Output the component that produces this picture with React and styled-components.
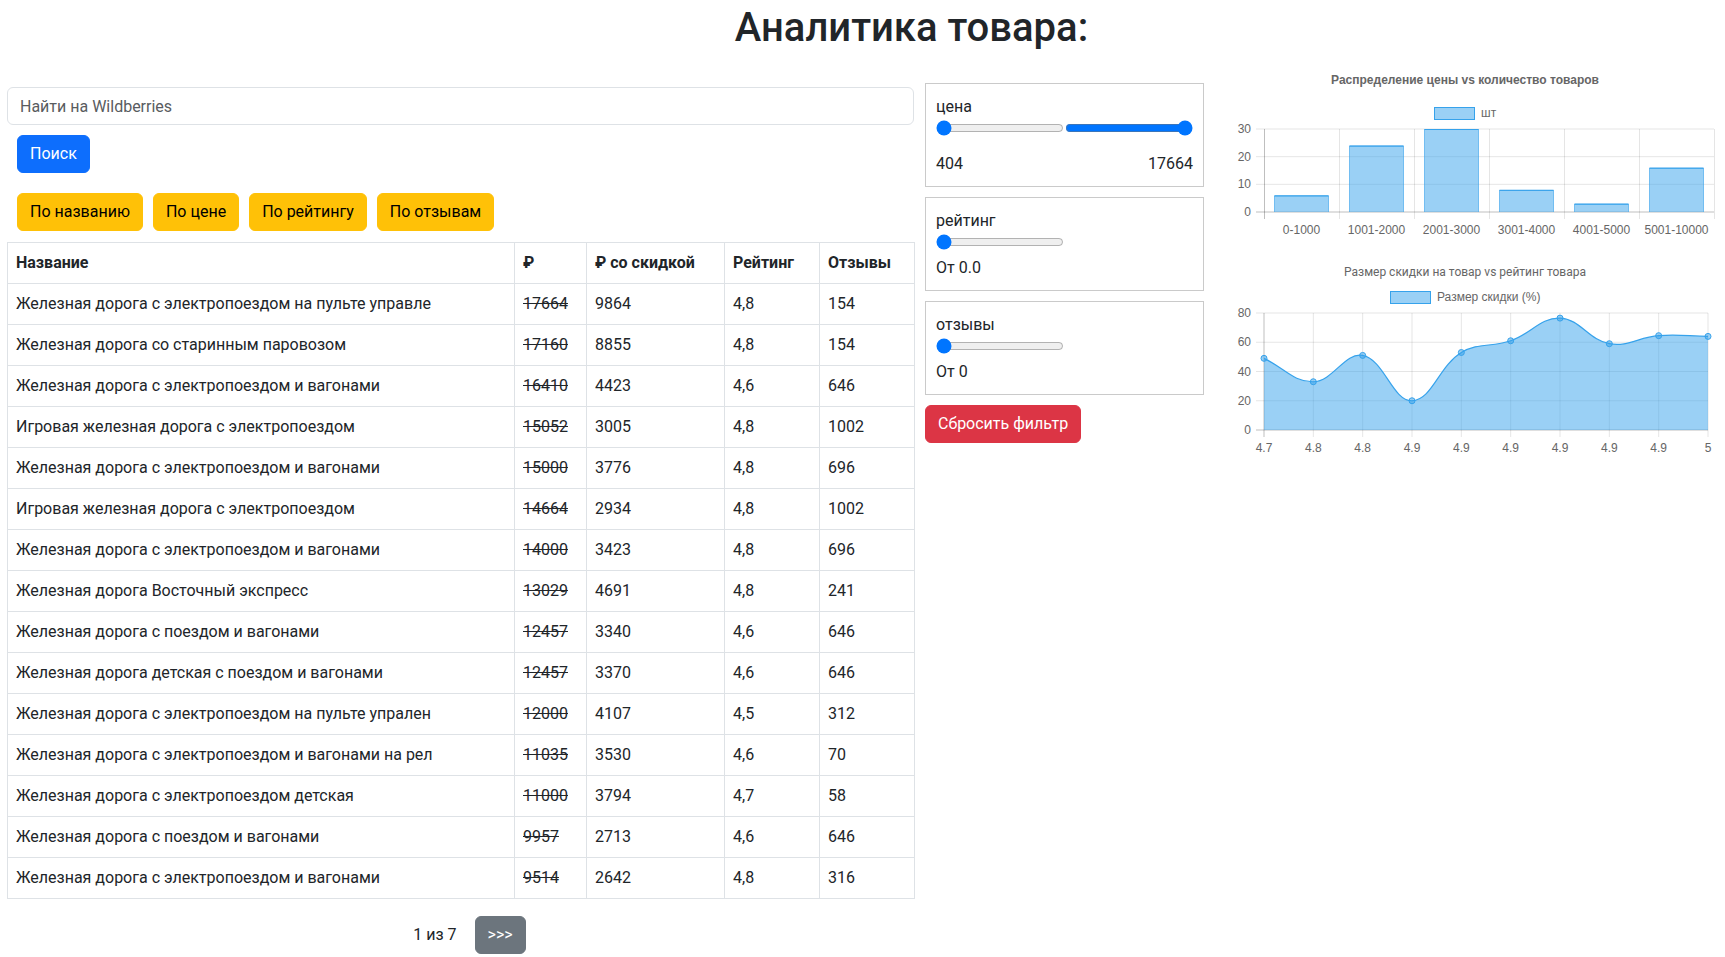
import styled, { createGlobalStyle } from 'styled-components'

const GlobalStyle = createGlobalStyle`
    body{
        margin: 0;
        font-family: Roboto, "Noto Sans", sans-serif;
        font-size: 16px;
        line-height: 24px;
        color: #212529;
        background: #fff;
    }
    *{
        box-sizing: border-box;
    }
`

const Page = styled.div`
    padding: 0 10px 0 7px;
`

const Title = styled.h1`
    margin: 0 0 10px;
    padding: 4px 0 0 101px;
    text-align: center;
    font-size: 40px;
    line-height: 48px;
    font-weight: 500;
    color: #212529;
`

const Layout = styled.div`
    display: grid;
    grid-template-columns: 907px 279px 500px;
    column-gap: 11px;
    align-items: start;
`

const LeftCol = styled.div`
    padding-top: 25px;
`

const SearchInput = styled.input`
    display: block;
    width: 100%;
    height: 38px;
    padding: 6px 12px;
    border: 1px solid #dee2e6;
    border-radius: 6px;
    font: inherit;
    color: #212529;
    &::placeholder{
        color: #595c5f;
    }
`

const Button = styled.button`
    height: 38px;
    padding: 6px 12px;
    border: 1px solid ${p => p.$bg};
    border-radius: 6px;
    background: ${p => p.$bg};
    color: ${p => p.$color || '#fff'};
    font: inherit;
    line-height: 24px;
    cursor: pointer;
`

const SearchRow = styled.div`
    margin: 10px 0 0 10px;
`

const SortRow = styled.div`
    display: flex;
    gap: 10px;
    margin: 20px 0 0 10px;
`

const Table = styled.table`
    width: 907px;
    margin-top: 11px;
    border-collapse: collapse;
    table-layout: fixed;
    th, td{
        border: 1px solid #dee2e6;
        padding: 8px;
        text-align: left;
        white-space: nowrap;
        overflow: hidden;
    }
    th{
        font-weight: 700;
    }
`

const Old = styled.td`
    text-decoration: line-through;
`

const Pager = styled.div`
    display: flex;
    justify-content: center;
    align-items: center;
    gap: 18px;
    margin-top: 17px;
    padding-left: 18px;
`

const MidCol = styled.div`
    padding-top: 21px;
    display: flex;
    flex-direction: column;
    align-items: flex-start;
    gap: 10px;
`

const FilterCard = styled.div`
    width: 100%;
    border: 1px solid #cacaca;
    padding: 11px 10px 10px;
`

const SliderRow = styled.div`
    display: flex;
    justify-content: space-between;
    margin-top: 1px;
    height: 16px;
`

const Range = styled.input`
    display: block;
    width: 128px;
    height: 16px;
    margin: 0;
`

const Values = styled.div`
    display: flex;
    justify-content: space-between;
    margin-top: ${p => p.$gap}px;
`

const RightCol = styled.div`
    display: flex;
    flex-direction: column;
`

const ChartSvg = styled.svg`
    display: block;
    font-family: "Liberation Sans", Arial, sans-serif;
    font-size: 12px;
    fill: #666;
`

const rows = [
    ['Железная дорога с электропоездом на пульте управле', 17664, 9864, '4,8', 154],
    ['Железная дорога со старинным паровозом', 17160, 8855, '4,8', 154],
    ['Железная дорога с электропоездом и вагонами', 16410, 4423, '4,6', 646],
    ['Игровая железная дорога с электропоездом', 15052, 3005, '4,8', 1002],
    ['Железная дорога с электропоездом и вагонами', 15000, 3776, '4,8', 696],
    ['Игровая железная дорога с электропоездом', 14664, 2934, '4,8', 1002],
    ['Железная дорога с электропоездом и вагонами', 14000, 3423, '4,8', 696],
    ['Железная дорога Восточный экспресс', 13029, 4691, '4,8', 241],
    ['Железная дорога с поездом и вагонами', 12457, 3340, '4,6', 646],
    ['Железная дорога детская с поездом и вагонами', 12457, 3370, '4,6', 646],
    ['Железная дорога с электропоездом на пульте упрален', 12000, 4107, '4,5', 312],
    ['Железная дорога с электропоездом и вагонами на рел', 11035, 3530, '4,6', 70],
    ['Железная дорога с электропоездом детская', 11000, 3794, '4,7', 58],
    ['Железная дорога с поездом и вагонами', 9957, 2713, '4,6', 646],
    ['Железная дорога с электропоездом и вагонами', 9514, 2642, '4,8', 316],
]

const FILL = 'rgba(54,162,235,0.5)'
const LINE = '#36a2eb'
const GRID = 'rgba(0,0,0,0.1)'

const bars = [['0-1000', 6], ['1001-2000', 24], ['2001-3000', 30], ['3001-4000', 8], ['4001-5000', 3], ['5001-10000', 16]]

function BarChart() {
    const left = 49, step = 75, y0 = 150, k = 83 / 30
    return (
        <ChartSvg width="500" height="190">
            <text x="250" y="22" textAnchor="middle" fontWeight="700">Распределение цены vs количество товаров</text>
            <rect x="219.5" y="45.5" width="40" height="12" fill={FILL} stroke={LINE} />
            <text x="266" y="55">шт</text>
            {[0, 10, 20, 30].map(v => (
                <g key={v}>
                    <line x1="41" x2="499" y1={y0 - v * k} y2={y0 - v * k} stroke={v === 0 ? 'rgba(0,0,0,0.25)' : GRID} />
                    <text x="36" y={y0 - v * k + 4} textAnchor="end">{v}</text>
                </g>
            ))}
            {bars.map((b, i) => (
                <line key={i} x1={left + i * step + 0.5} x2={left + i * step + 0.5} y1="67" y2="157" stroke={i === 0 ? 'rgba(0,0,0,0.25)' : GRID} />
            ))}
            <line x1="499.5" x2="499.5" y1="67" y2="157" stroke={GRID} />
            {bars.map(([label, v], i) => {
                const x = left + i * step + 10.5, h = v * k
                return (
                    <g key={label}>
                        <rect x={x} y={y0 - h} width="54" height={h} fill={FILL} />
                        <path d={`M${x},${y0} V${y0 - h + 0.5} H${x + 54} V${y0}`} fill="none" stroke={LINE} strokeOpacity="0.6" />
                        <line x1={x} x2={x + 54} y1={y0 - h + 0.5} y2={y0 - h + 0.5} stroke={LINE} />
                        <text x={left + i * step + 37.5} y="172" textAnchor="middle">{label}</text>
                    </g>
                )
            })}
        </ChartSvg>
    )
}

const points = [[4.7, 49], [4.8, 33], [4.8, 51], [4.9, 20], [4.9, 53], [4.9, 61], [4.9, 76.5], [4.9, 59], [4.9, 64.5], [5, 64]]

function spline(pts, t = 0.4) {
    const cps = pts.map((p, i) => {
        const prev = pts[i - 1] || p, next = pts[i + 1] || p
        const d01 = Math.hypot(p.x - prev.x, p.y - prev.y)
        const d12 = Math.hypot(next.x - p.x, next.y - p.y)
        const s01 = d01 / (d01 + d12) || 0, s12 = d12 / (d01 + d12) || 0
        return {
            a: { x: p.x - t * s01 * (next.x - prev.x), y: p.y - t * s01 * (next.y - prev.y) },
            b: { x: p.x + t * s12 * (next.x - prev.x), y: p.y + t * s12 * (next.y - prev.y) },
        }
    })
    let d = `M${pts[0].x},${pts[0].y}`
    for (let i = 1; i < pts.length; i++) {
        d += ` C${cps[i - 1].b.x},${cps[i - 1].b.y} ${cps[i].a.x},${cps[i].a.y} ${pts[i].x},${pts[i].y}`
    }
    return d
}

function LineChart() {
    const left = 49, right = 493, y0 = 178, k = 117 / 80
    const step = (right - left) / (points.length - 1)
    const pts = points.map(([, v], i) => ({ x: left + i * step, y: y0 - v * k }))
    const curve = spline(pts)
    return (
        <ChartSvg width="500" height="210">
            <text x="250" y="24" textAnchor="middle" fontFamily="Roboto, sans-serif">Размер скидки на товар vs рейтинг товара</text>
            <rect x="175.5" y="39.5" width="40" height="12" fill={FILL} stroke={LINE} />
            <text x="222" y="49">Размер скидки (%)</text>
            {[0, 20, 40, 60, 80].map(v => (
                <g key={v}>
                    <line x1="41" x2={right} y1={y0 - v * k} y2={y0 - v * k} stroke={v === 0 ? 'rgba(0,0,0,0.25)' : GRID} />
                    <text x="36" y={y0 - v * k + 4} textAnchor="end">{v}</text>
                </g>
            ))}
            {pts.map((p, i) => (
                <g key={i}>
                    <line x1={p.x} x2={p.x} y1={y0 - 80 * k} y2={y0 + 7} stroke={i === 0 ? 'rgba(0,0,0,0.25)' : GRID} />
                    <text x={p.x} y="200" textAnchor="middle">{points[i][0]}</text>
                </g>
            ))}
            <path d={`${curve} L${pts[pts.length - 1].x},${y0} L${left},${y0} Z`} fill={FILL} />
            <path d={curve} fill="none" stroke={LINE} strokeWidth="1.2" />
            {pts.map((p, i) => (
                <circle key={i} cx={p.x} cy={p.y} r="3" fill={FILL} stroke={LINE} />
            ))}
        </ChartSvg>
    )
}

function App() {
    return (
        <Page>
            <GlobalStyle />
            <Title>Аналитика товара:</Title>
            <Layout>
                <LeftCol>
                    <SearchInput placeholder="Найти на Wildberries" />
                    <SearchRow>
                        <Button $bg="#0d6efd">Поиск</Button>
                    </SearchRow>
                    <SortRow>
                        {['По названию', 'По цене', 'По рейтингу', 'По отзывам'].map(t => (
                            <Button key={t} $bg="#ffc107" $color="#000">{t}</Button>
                        ))}
                    </SortRow>
                    <Table>
                        <colgroup>
                            <col style={{ width: 507 }} />
                            <col style={{ width: 72 }} />
                            <col style={{ width: 138 }} />
                            <col style={{ width: 95 }} />
                            <col style={{ width: 95 }} />
                        </colgroup>
                        <thead>
                            <tr>
                                <th>Название</th>
                                <th>₽</th>
                                <th>₽ со скидкой</th>
                                <th>Рейтинг</th>
                                <th>Отзывы</th>
                            </tr>
                        </thead>
                        <tbody>
                            {rows.map((r, i) => (
                                <tr key={i}>
                                    <td>{r[0]}</td>
                                    <Old>{r[1]}</Old>
                                    <td>{r[2]}</td>
                                    <td>{r[3]}</td>
                                    <td>{r[4]}</td>
                                </tr>
                            ))}
                        </tbody>
                    </Table>
                    <Pager>
                        <span>1 из 7</span>
                        <Button $bg="#6c757d">&gt;&gt;&gt;</Button>
                    </Pager>
                </LeftCol>
                <MidCol>
                    <FilterCard>
                        <div>цена</div>
                        <SliderRow>
                            <Range type="range" min="404" max="17664" defaultValue="404" />
                            <Range type="range" min="404" max="17664" defaultValue="17664" />
                        </SliderRow>
                        <Values $gap={16}>
                            <span>404</span>
                            <span>17664</span>
                        </Values>
                    </FilterCard>
                    <FilterCard>
                        <div>рейтинг</div>
                        <SliderRow>
                            <Range type="range" min="0" max="5" step="0.1" defaultValue="0" />
                        </SliderRow>
                        <Values $gap={6}>
                            <span>От 0.0</span>
                        </Values>
                    </FilterCard>
                    <FilterCard>
                        <div>отзывы</div>
                        <SliderRow>
                            <Range type="range" min="0" max="1002" defaultValue="0" />
                        </SliderRow>
                        <Values $gap={6}>
                            <span>От 0</span>
                        </Values>
                    </FilterCard>
                    <Button $bg="#dc3545">Сбросить фильтр</Button>
                </MidCol>
                <RightCol>
                    <BarChart />
                    <LineChart />
                </RightCol>
            </Layout>
        </Page>
    )
}

export default App
